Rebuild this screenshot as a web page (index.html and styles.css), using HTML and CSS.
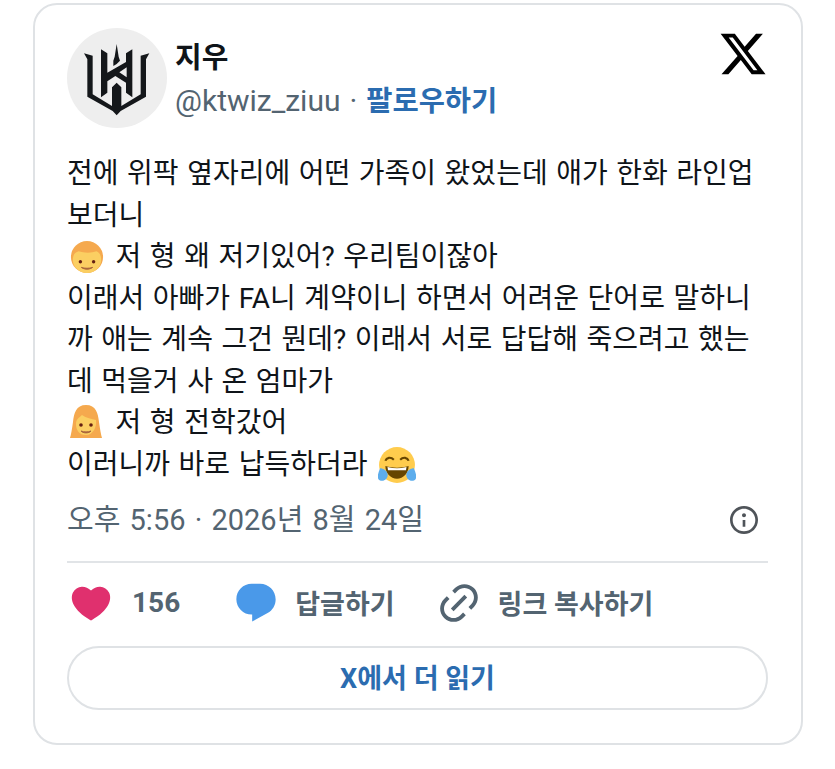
FILE: index.html
```html
<!DOCTYPE html>
<html lang="ko">
<head>
  <meta charset="UTF-8">
  <meta name="viewport" content="width=device-width, initial-scale=1.0">
  <title>지우 트윗</title>
  <link rel="stylesheet" href="styles.css">
</head>
<body>

  <div class="card">
    <div class="head">
      <div class="avatar">
        <svg class="logo" viewBox="-39 -36 300 300">
          <path d="M12 40 L38 47 L38 163 L96 198 L96 142 L110 128 L124 142 L124 198 L182 163 L182 47 L208 40 L198 58 L198 170 L122 213 L110 226 L98 213 L22 170 L22 58 Z"/>
          <path fill-rule="evenodd" d="M63 28 L82 40 L82 98 L138 66 L138 40 L157 28 L157 172 L138 158 L138 128 L106 108 L82 124 L82 158 L63 172 Z M140 82 L140 112 L118 97 Z"/>
          <path d="M110 12 L116 50 L120 62 L110 72 L100 78 L100 62 L104 50 Z"/>
        </svg>
      </div>
      <div class="who">
        <div class="name">지우</div>
        <div class="handle">@ktwiz_ziuu · <span class="follow">팔로우하기</span></div>
      </div>
      <svg class="xlogo" viewBox="0 0 24 24"><path d="M18.244 2.250h3.308l-7.227 8.260 8.502 11.240H16.170l-5.214-6.817L4.990 21.750H1.680l7.730-8.835L1.254 2.250H8.080l4.713 6.231zm-1.161 17.520h1.833L7.084 4.126H5.117z"/></svg>
    </div>

    <div class="text">
      전에 위팍 옆자리에 어떤 가족이 왔었는데 애가 한화 라인업<br>
      보더니<br>
      <svg class="emoji" viewBox="0 0 36 36">
        <circle cx="18" cy="18" r="17" fill="#f5a94e"/>
        <path d="M3 21c0-6 3-8 6-9 6 2 14 2 19 0 3 1 5 4 5 9 0 8-7 14-15 14S3 29 3 21z" fill="#fbcf62"/>
        <circle cx="11" cy="23" r="1.800" fill="#662113"/><circle cx="25" cy="23" r="1.800" fill="#662113"/>
        <path d="M12 29c4 1.200 8 1.200 12 0-3 2.500-9 2.500-12 0z" fill="#a8643c" stroke="#a8643c"/>
      </svg> 저 형 왜 저기있어? 우리팀이잖아<br>
      이래서 아빠가 FA니 계약이니 하면서 어려운 단어로 말하니<br>
      까 애는 계속 그건 뭔데? 이래서 서로 답답해 죽으려고 했는<br>
      데 먹을거 사 온 엄마가<br>
      <svg class="emoji emoji-girl" viewBox="0 0 36 36">
        <path d="M18 1C8 1 6 9 5 18c-1 7-2 13-3 16h32c-1-3-2-9-3-16C30 9 28 1 18 1z" fill="#f5a94e"/>
        <path d="M8 20c0-5 3-6 6-9 4 3 10 4 14 5 1 7-3 15-10 15S8 26 8 20z" fill="#fbcf62"/>
        <circle cx="13" cy="21" r="1.800" fill="#662113"/><circle cx="23" cy="21" r="1.800" fill="#662113"/>
        <path d="M13 27c3 1.200 7 1.200 10 0-2 2.500-8 2.500-10 0z" fill="#a8643c" stroke="#a8643c"/>
      </svg> 저 형 전학갔어<br>
      이러니까 바로 납득하더라 <svg class="emoji emoji-joy" viewBox="0 0 36 36">
        <circle cx="18" cy="18" r="17" fill="#ffcc4d"/>
        <path d="M7 14c1-3 5-4 8-1M21 13c3-3 7-2 8 1" fill="none" stroke="#664500" stroke-width="2"/>
        <path d="M7 19c7 2 15 2 22 0 0 7-5 12-11 12S7 26 7 19z" fill="#664500"/>
        <path d="M9 20c6 1.500 12 1.500 18 0l-.500 3H9.500z" fill="#fff"/>
        <path d="M2 21c3 0 6 2 7 5 1 4-2 7-5 7s-5-2-4-6c.500-2 1-4 2-6zM34 21c-3 0-6 2-7 5-1 4 2 7 5 7s5-2 4-6c-.500-2-1-4-2-6z" fill="#5dadec"/>
      </svg>
    </div>

    <div class="meta">
      <span>오후 5:56 · 2026년 8월 24일</span>
      <svg class="info" viewBox="0 0 24 24"><path d="M13.500 8.500c0 .830-.670 1.500-1.500 1.500s-1.500-.670-1.500-1.500S11.170 7 12 7s1.500.670 1.500 1.500zM13 17v-5h-2v5h2zm-1 5.500C6.200 22.500 1.500 17.800 1.500 12S6.200 1.500 12 1.500 22.500 6.200 22.500 12 17.800 22.500 12 22.500zM12 3.500c-4.690 0-8.500 3.810-8.500 8.500s3.810 8.500 8.500 8.500 8.500-3.810 8.500-8.500-3.810-8.500-8.500-8.500z"/></svg>
    </div>

    <div class="actions">
      <div class="action like">
        <svg class="icon heart" viewBox="0 0 24 24"><path d="M20.884 13.190c-1.351 2.480-4.001 5.120-8.379 7.670l-.503.300-.504-.300c-4.379-2.550-7.029-5.190-8.382-7.670-1.360-2.500-1.410-4.860-.514-6.670.887-1.790 2.647-2.910 4.601-3.010 1.651-.090 3.368.560 4.798 2.010 1.429-1.450 3.146-2.100 4.796-2.010 1.954.100 3.714 1.220 4.601 3.010.896 1.810.846 4.170-.514 6.670z"/></svg>
        <span class="count">156</span>
      </div>
      <div class="action reply">
        <svg class="icon bubble" viewBox="0 0 24 24"><path d="M1.751 10c0-4.420 3.584-8 8.005-8h4.366c4.490 0 8.129 3.640 8.129 8.130 0 2.960-1.607 5.680-4.196 7.110l-8.054 4.460v-3.690h-.067c-4.490.100-8.183-3.510-8.183-8.010z"/></svg>
        <span>답글하기</span>
      </div>
      <div class="action copy">
        <svg class="icon chain" viewBox="0 0 24 24"><path d="M18.360 5.640c-1.950-1.960-5.110-1.960-7.070 0L9.880 7.050 8.460 5.640l1.420-1.420c2.730-2.730 7.160-2.730 9.900 0 2.730 2.740 2.730 7.170 0 9.900l-1.420 1.420-1.410-1.420 1.410-1.410c1.960-1.960 1.960-5.120 0-7.070zm-2.120 3.530l-7.070 7.070-1.410-1.410 7.070-7.070 1.410 1.410zm-12.020.710l1.420-1.420 1.410 1.420-1.410 1.410c-1.960 1.960-1.960 5.120 0 7.070 1.950 1.960 5.110 1.960 7.070 0l1.410-1.410 1.420 1.410-1.420 1.420c-2.730 2.730-7.160 2.730-9.900 0-2.730-2.740-2.730-7.170 0-9.900z"/></svg>
        <span>링크 복사하기</span>
      </div>
    </div>

    <div class="more">X에서 더 읽기</div>
  </div>

</body>
</html>
```

FILE: styles.css
```css
body {
  font-family: Roboto, 'Noto Sans CJK KR', sans-serif;
  margin: 0;
  padding: 0;
  background-color: #fff;
  color: #0f1419;
}
.card {
  box-sizing: border-box;
  width: 770px;
  height: 742px;
  margin: 3px 0 0 33px;
  padding: 23px 33px 0 32px;
  background: #fff;
  border: 2px solid #dfe2e5;
  border-radius: 24px;
}
.head {
  display: flex;
  align-items: center;
}
.avatar {
  width: 100px;
  height: 100px;
  border-radius: 50%;
  background-color: #eeeeee;
  flex-shrink: 0;
}
.logo {
  display: block;
  width: 100px;
  height: 100px;
  fill: #14171a;
}
.who {
  margin-left: 8px;
  flex: 1;
}
.name {
  margin-top: 3px;
  font-size: 29px;
  font-weight: 700;
  line-height: 40px;
}
.handle {
  margin-top: 3px;
  font-size: 30px;
  line-height: 40px;
  word-spacing: 1.5px;
  color: #536471;
}
.follow {
  font-size: 28.5px;
  font-weight: 700;
  color: #2b6cb0;
}
.xlogo {
  width: 50px;
  height: 50px;
  margin: -48px 0 0 0;
}
.text {
  margin-top: 25px;
  font-size: 28px;
  line-height: 41.5px;
  word-spacing: 1.6px;
  white-space: nowrap;
}
.emoji {
  width: 34px;
  height: 34px;
  vertical-align: -8px;
  margin: 0 3px 0 3px;
}
.emoji-girl {
  width: 36px;
  height: 36px;
  margin: 0 3px 0 1px;
}
.emoji-joy {
  width: 38px;
  height: 38px;
  vertical-align: -10px;
  margin: 0 0 0 2px;
}
.meta {
  display: flex;
  justify-content: space-between;
  align-items: center;
  margin-top: 15px;
  padding-bottom: 21px;
  border-bottom: 2px solid #e1e4e7;
  font-size: 29px;
  line-height: 40px;
  word-spacing: 2px;
  color: #536471;
}
.info {
  width: 32px;
  height: 32px;
  margin-right: 8px;
  fill: #4f5459;
}
.actions {
  display: flex;
  align-items: center;
  height: 79px;
  padding-bottom: 4px;
  font-size: 27px;
  font-weight: 700;
  color: #536471;
}
.action {
  display: flex;
  align-items: center;
}
.icon {
  width: 46px;
  height: 46px;
  margin-right: 16px;
}
.count {
  margin-left: 2px;
  font-size: 28px;
}
.like {
  margin-left: 1px;
  margin-right: 53px;
}
.reply {
  margin-right: 41px;
}
.heart {
  fill: #e0306e;
}
.bubble {
  fill: #4a99e9;
}
.chain {
  fill: #536471;
}
.more {
  height: 64px;
  line-height: 62px;
  box-sizing: border-box;
  border: 2px solid #dfe2e5;
  border-radius: 32px;
  text-align: center;
  font-size: 27px;
  font-weight: 700;
  color: #2b6cb0;
}
```
